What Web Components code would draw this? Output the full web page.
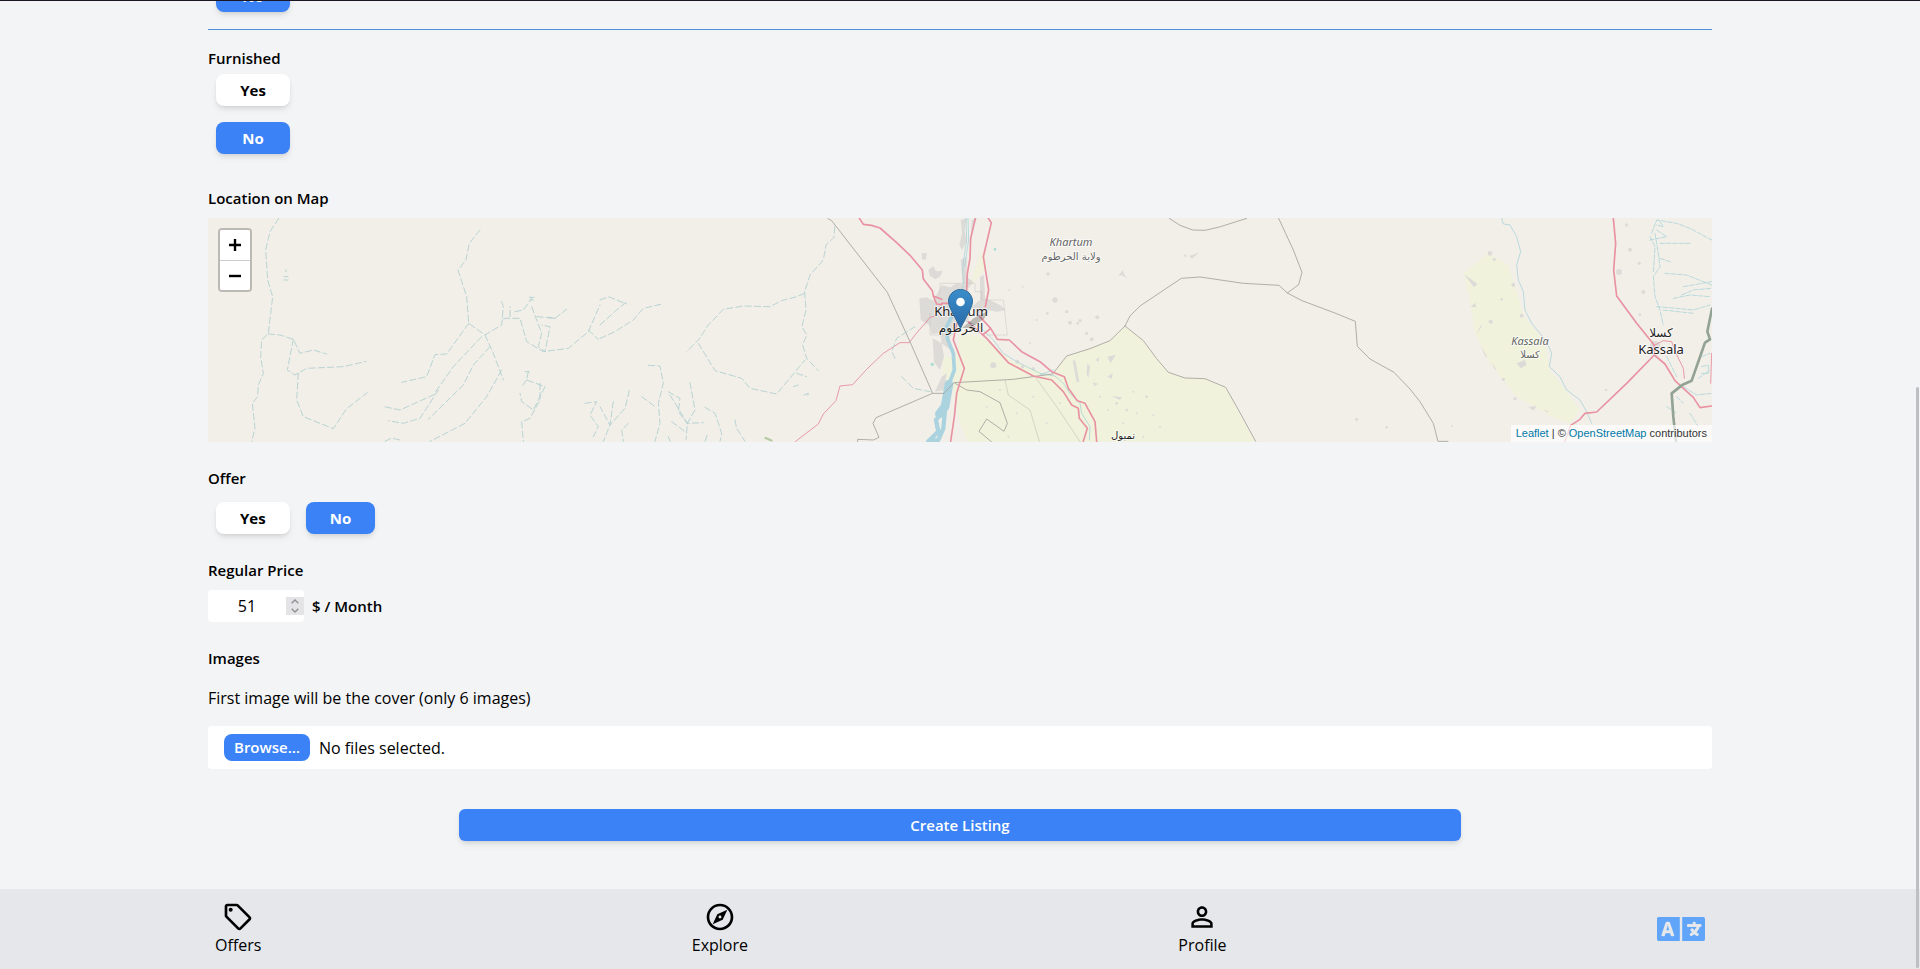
<!DOCTYPE html>
<html lang="en">
<head>
<meta charset="utf-8">
<meta name="viewport" content="width=device-width, initial-scale=1">
<title>Create Listing</title>
<style>
  html, body { margin: 0; }
  body { background: #f3f4f6; color: #000; font: 16px/24px "Open Sans", "Noto Sans", sans-serif; }
</style>
</head>
<body>
<listing-page></listing-page>

<script>
const define = (name, html, setup) => {
  const template = document.createElement('template');
  template.innerHTML = html;
  customElements.define(name, class extends HTMLElement {
    connectedCallback() {
      if (this.shadowRoot) return;
      this.attachShadow({ mode: 'open' }).append(template.content.cloneNode(true));
      if (setup) setup(this, this.shadowRoot);
    }
  });
};

/* Yes / No toggle button */
define('choice-button', `
<style>
  :host { display: block; margin: 8px; }
  button { display: block; width: 100%; height: 32px; padding: 0 24px; border: 0; border-radius: 8px;
    background: #fff; color: #000; font: inherit; font-size: 15px; font-weight: 700; cursor: pointer;
    box-shadow: 0 4px 6px -1px rgba(0,0,0,.1), 0 2px 4px -2px rgba(0,0,0,.1); }
  :host([active]) button { background: #3b82f6; color: #fff; }
</style>
<button type="button"><slot></slot></button>`,
(host, root) => root.querySelector('button').setAttribute('aria-pressed', host.hasAttribute('active')));

/* A titled group of controls */
define('form-group', `
<style>
  :host { display: block; }
  h2 { margin: 0; font-size: 15px; font-weight: 600; }
</style>
<h2></h2><slot></slot>`,
(host, root) => { root.querySelector('h2').textContent = host.getAttribute('heading'); });

define('price-field', `
<style>
  :host { display: flex; align-items: center; gap: 8px; margin-top: 8px; }
  .box { display: flex; align-items: center; width: 96px; height: 32px; border-radius: 4px; background: #fff; }
  input { width: 78px; box-sizing: border-box; padding: 0; border: 0; background: none; font: inherit; color: inherit;
    text-align: center; appearance: textfield; outline: 0; }
  input::-webkit-inner-spin-button { appearance: none; margin: 0; }
  .spin { display: flex; flex-direction: column; width: 18px; height: 18px; background: #e4e4e7; }
  .spin button { flex: 1; padding: 0; border: 0; background: none; display: grid; place-items: center; }
  svg { display: block; width: 8px; height: 5px; fill: none; stroke: #8f8f94; stroke-width: 1.3; }
  label { font-size: 15px; font-weight: 600; }
</style>
<div class="box">
  <input id="price" type="number" value="51">
  <div class="spin">
    <button type="button" aria-label="Increase"><svg viewBox="0 0 8 5"><path d="M.7 4.3 4 1l3.3 3.3"/></svg></button>
    <button type="button" aria-label="Decrease"><svg viewBox="0 0 8 5"><path d="M.7.7 4 4 7.3.7"/></svg></button>
  </div>
</div>
<label for="price">$ / Month</label>`,
(host, root) => {
  const input = root.querySelector('input');
  const [up, down] = root.querySelectorAll('button');
  up.onclick = () => input.stepUp();
  down.onclick = () => input.stepDown();
});

define('file-field', `
<style>
  :host { display: block; margin-top: 16px; }
  label { display: flex; align-items: center; gap: 9px; height: 43px; padding: 0 16px; border-radius: 4px;
    background: #fff; position: relative; }
  .browse { padding: 0 10px; line-height: 27px; border-radius: 8px; background: #3b82f6; color: #fff; font-size: 15px; font-weight: 600; }
  input { position: absolute; inset: 0; width: 100%; opacity: 0; }
</style>
<label><span class="browse">Browse…</span><span>No files selected.</span><input type="file" multiple accept="image/*"></label>`);

define('location-map', `
<style>
  :host { display: block; position: relative; height: 224px; margin-top: 8px; overflow: hidden; background: #f2efe9; }
  .map { display: block; width: 100%; height: 100%; }
  .zoom { position: absolute; top: 10px; left: 10px; border: 2px solid rgba(0,0,0,.22); border-radius: 4px; background-clip: padding-box; }
  .zoom button { display: grid; place-items: center; width: 30px; height: 30px; padding: 0; border: 0; background: #fff; }
  .zoom button:first-child { border-radius: 2px 2px 0 0; }
  .zoom button:last-child { border-top: 1px solid #ccc; border-radius: 0 0 2px 2px; }
  .zoom svg { width: 12px; height: 12px; stroke: #000; stroke-width: 2.4; }
  .credit { position: absolute; right: 0; bottom: 0; padding: 0 5px; background: rgba(255,255,255,.7); color: #333;
    font: 11px/17px "Liberation Sans", Arial, sans-serif; }
  a { color: #0078a8; text-decoration: none; }
  .l { fill: none; stroke-linejoin: round; stroke-linecap: round; }
  .r { stroke: #e892a2; stroke-width: 5; }
  .r2 { stroke: #e892a2; stroke-width: 2.8; }
  .b { stroke: #aaa9a3; stroke-width: 2.8; }
  .w { stroke: #aad3d9; stroke-width: 2.4; }
  .d { stroke: #a6cbcc; stroke-width: 2.3; stroke-dasharray: 19 9; }
  .u { fill: #dddbd8; }
  .g { fill: #f0f2db; }
  text { font-family: "Noto Sans", "DejaVu Sans", sans-serif; text-anchor: middle; paint-order: stroke; stroke: rgba(255,255,255,.6); stroke-width: 2px; stroke-linejoin: round; }
  .city { font-size: 13px; fill: #222; }
  .ar { font-size: 12px; fill: #222; font-family: "DejaVu Sans", sans-serif; }
  .state { font-size: 11px; fill: #666; font-style: italic; }
  .star { font-size: 10px; fill: #666; font-family: "DejaVu Sans", sans-serif; }
</style>
<svg class="map" viewBox="208 218 1504 224" preserveAspectRatio="xMidYMid slice" role="img" aria-label="Map around Khartoum">
  <defs>
    <linearGradient id="pin" x1="0" y1="0" x2="0" y2="1"><stop offset="0" stop-color="#3a8ecb"/><stop offset="1" stop-color="#2a69a8"/></linearGradient>
  </defs>

  <!-- farmland and built-up areas around the Nile -->
  <g transform="translate(800 210) scale(.33333)">
    <path class="g" d="M455 515 480 370 545 380 640 455 755 495 800 440 930 392 975 348 1030 392 1105 487 1155 504 1215 506 1277 532 1367 700H505L480 640Z"/>
    <path class="g" d="M510 230 560 170 548 120 520 190ZM430 440 425 510 450 515 460 440Z"/>
    <path class="u" d="M482 30 500 25 494 60 500 95 486 120 478 105 486 70ZM515 30 530 25 520 60 512 95ZM482 150 500 140 500 200 520 215 505 235 488 215ZM385 180 400 168 408 184 428 182 420 200 405 208 390 198ZM365 130 380 128 378 150 366 148ZM425 225 450 232 470 220 500 226 515 270 505 330 480 345 450 380 452 420 425 400 420 370 395 372 388 345 362 330 358 265 380 262 400 272 412 250ZM540 200 552 195 555 265 580 275 600 285 618 300 590 305 560 300 530 320 515 290 540 270ZM398 385 425 400 432 440 420 480 402 455ZM425 500 440 490 432 540 405 545Z"/>
    <path class="l" stroke="#c6c4c0" stroke-width="1.5" d="M420 250V220H525V245H545V270H610L622 375H560M390 310V375H440M392 320 375 345"/>
    <g class="u">
      <circle cx="580" cy="466" r="9"/><circle cx="652" cy="455" r="6"/><circle cx="668" cy="470" r="5"/><circle cx="700" cy="476" r="5"/><circle cx="765" cy="270" r="8"/><circle cx="800" cy="305" r="5"/><circle cx="810" cy="338" r="6"/><circle cx="742" cy="310" r="4"/><circle cx="744" cy="192" r="5"/><circle cx="892" cy="322" r="6"/><circle cx="840" cy="332" r="5"/><circle cx="860" cy="370" r="5"/><circle cx="875" cy="388" r="6"/><circle cx="833" cy="340" r="4"/>
      <path d="M955 198 968 180 972 192 982 205 965 196ZM818 450 826 452 838 515 830 517ZM862 460 870 470 865 505 860 490ZM922 440 948 434 932 460ZM885 450 898 442 896 455ZM922 500 938 490 936 506ZM880 517 895 522 882 528ZM935 558 965 562 960 570ZM1150 137 1158 132 1160 142ZM1168 138 1198 127 1176 146Z"/>
      <circle cx="980" cy="600" r="4"/><circle cx="1040" cy="560" r="4"/><circle cx="950" cy="580" r="4"/><circle cx="900" cy="560" r="3"/><circle cx="1010" cy="610" r="3"/><circle cx="600" cy="540" r="3"/><circle cx="650" cy="610" r="3"/><circle cx="700" cy="560" r="3"/><circle cx="740" cy="640" r="3"/><circle cx="625" cy="680" r="3"/><circle cx="780" cy="580" r="3"/><circle cx="560" cy="590" r="3"/><circle cx="1670" cy="628" r="5"/><circle cx="1760" cy="652" r="4"/>
      <circle cx="628" cy="240" r="3"/><circle cx="668" cy="230" r="3"/><circle cx="690" cy="400" r="3"/><circle cx="710" cy="330" r="3"/><circle cx="1000" cy="545" r="3"/><circle cx="970" cy="640" r="3"/><circle cx="1060" cy="615" r="3"/><circle cx="925" cy="600" r="3"/><circle cx="1080" cy="650" r="3"/><circle cx="1030" cy="680" r="3"/>
    </g>
    <!-- rivers -->
    <path class="l w" d="M498 25 500 90 488 170 490 225 478 280M504 25 506 90 494 170"/>
    <path class="l" stroke="#aad3df" stroke-width="11" d="M460 310 440 350 442 385 460 430 463 480 448 520"/>
    <path class="l" stroke="#aad3df" stroke-width="26" d="M447 522 435 590 418 612"/>
    <path class="l" stroke="#aad3df" stroke-width="13" d="M430 600 408 630 415 665 385 694M435 600 430 655 415 690 385 696"/>
    <path class="l w" d="M490 330 540 350 580 390 610 430 650 455 720 490 765 498 790 520 810 550 840 580 845 610 870 650 868 690M760 480 720 495"/>
    <circle cx="397" cy="463" r="5" fill="#a9dcd3"/><circle cx="585" cy="118" r="4" fill="#a9dcd3"/>
    <!-- province borders -->
    <path class="l b" d="M84 26 95 32 262 247 330 395 398 550 432 550 462 518 640 508 758 492 800 438 870 416 930 392 975 348M398 550 228 623 219 640 237 682 220 690 173 688V696M465 520 500 540 540 545 600 578 622 640 612 664 560 627 537 664 575 696"/>
    <path class="l" stroke="#bcbbb2" stroke-width="1.6" d="M705 500 770 590 840 695M615 510 625 555 690 600 718 694"/>
    <path class="l b" d="M975 348 990 318 1020 288 1144 205 1200 201 1330 220 1437 226 1462 249 1506 272 1602 308 1666 334 1672 409 1710 447 1782 487 1830 537 1860 575 1900 640 1914 694H1944M1462 249 1496 224 1506 187 1480 120 1436 25M1108 25 1140 46 1178 60 1215 61 1262 50 1340 25M975 348 1030 392 1070 446 1105 487 1155 504 1215 506 1277 532 1310 590 1367 694"/>
    <!-- trunk roads -->
    <path class="l r" d="M178 25 190 43 215 46 240 54 290 98 330 136 367 180 370 207 397 242 400 258 425 268M526 25 512 85 510 145 502 190 500 240M565 25 574 38 550 140 566 240 556 290M425 280H455M400 258 410 282 425 284M470 340 460 390 493 475 470 550 463 620 452 694M535 315 572 355 592 388 628 390 665 425 720 455 755 485 793 500 805 535 832 572 855 580 885 635 890 694M505 335 560 385 625 458 700 498 755 510 790 545 815 585 835 595 838 625 862 655 850 694M572 355 548 375"/>
    <path class="l r2" d="M405 318 390 322 345 375 328 398 300 398 250 430 200 478 158 524 120 528 108 572 70 612 55 642 0 684-14 695"/>
    <!-- seasonal streams -->
    <path class="l d" d="M104 50 102 82 78 105 70 150 30 195 14 245 18 300 6 350 20 375 8 405 20 445 55 482M285 445 275 425 290 385 345 350M305 500 340 535 390 545M14 250-10 260-55 272-90 290-170 288-230 298-275 345-305 390-340 425M-305 400-255 482-175 505-150 535-70 552 15 450"/>
  </g>

  <!-- seasonal streams in the west -->
  <g class="l d" transform="translate(200 210) scale(.33333)">
    <path d="M236 25 210 65 197 120 203 210 218 260 205 370 185 390 182 440 190 490 175 525 173 560 157 580 165 655 155 694M205 372 240 375 280 388 300 430 340 420 380 432M280 388 262 480 285 495 320 475 430 470 498 454M295 490 290 570 310 620 400 656 440 596 502 548"/>
    <path d="M840 60 808 100 798 150 774 180 800 260 806 340 855 375 905 345 910 290 903 270M855 375 880 430 910 510M806 340 740 432 705 434 680 500 605 517M845 380 760 470 700 555 600 600 553 590M870 410 820 465 790 525 685 628M715 540 660 625 610 640 565 632M905 480 860 560 795 640 690 694M555 694 575 684 600 690M910 325 960 325 980 395 1030 425 1105 415 1165 365 1200 285M930 320 930 290M945 305 970 300 995 265M995 290 1025 370 1015 410 1035 425 1050 350 1025 345M1010 320 1065 325 1100 298M1165 360 1195 388M985 485 980 510 1035 530 1000 600 965 575 960 550M980 510 965 530M1020 520 1020 570 990 625 965 635 970 694M1155 580 1190 575 1170 615 1195 650 1180 680M1200 345 1250 300 1280 275"/>
    <path stroke-dasharray="none" d="M252 200H264M252 210H264M258 180V185M988 262H1002M990 270H1000M1045 322 1065 325M975 485H987"/>
  </g>
  <g class="l d" transform="translate(600 210) scale(.33333)">
    <path d="M0 270 25 260 80 282M0 385 45 365 100 330 130 295 182 283M145 466 180 468 190 520 175 580 180 640 165 694M88 542 75 595 30 645 0 590M40 575 30 645 10 694M85 640 65 660 70 694M125 560 165 590M270 518 285 600 262 640 258 690M205 545 240 565 235 605 262 640 310 638M210 555 262 640M215 635 255 665M315 592 345 610 365 670 360 694M405 630 410 655 435 694M205 680 210 694M315 694 322 674M590 490 620 500M580 530 595 525M612 555 625 550 622 562"/>
    <path d="M497 684 520 694" stroke="#b5cba5" stroke-width="7"/>
  </g>

  <!-- Kassala and the eastern border -->
  <g transform="translate(1400 210) scale(.33333)">
    <path class="g" d="M190 190 265 130 325 165 355 260 370 320 430 390 450 480 540 600 510 640 455 620 350 560 270 460 225 370 210 270Z"/>
    <g class="u"><path d="M192 192 232 222 222 232ZM182 296 218 322ZM212 290 226 278 228 292ZM230 372 248 346 240 350ZM242 405 262 442 256 440ZM275 455 290 480 284 478ZM350 460 375 450 380 465 362 475ZM385 590 410 588 400 602ZM430 598 450 606 440 606Z"/>
      <circle cx="270" cy="130" r="7"/><circle cx="283" cy="148" r="5"/><circle cx="340" cy="225" r="6"/><circle cx="365" cy="317" r="6"/><circle cx="272" cy="335" r="6"/><circle cx="657" cy="186" r="9"/><circle cx="730" cy="246" r="6"/><circle cx="718" cy="160" r="5"/><circle cx="690" cy="119" r="6"/><circle cx="680" cy="45" r="5"/><circle cx="765" cy="408" r="16"/><circle cx="345" cy="566" r="5"/><circle cx="618" cy="540" r="4"/><circle cx="720" cy="314" r="4"/><circle cx="155" cy="648" r="3"/><circle cx="310" cy="508" r="5"/><circle cx="305" cy="268" r="4"/>
    </g>
    <path class="l w" d="M305 25 310 42 330 45 350 80 362 125 350 165 355 210 370 245 375 300 395 340 440 395 455 430 448 470 480 500 500 540 540 570 560 605 575 640"/>
    <path class="l w" stroke-dasharray="14 5" d="M755 70 770 30 830 40 870 55 935 90M770 60 800 80 750 90M780 100 870 100M765 70 775 130 780 170 760 200 765 260 780 300 790 345M750 80 765 110 760 190M795 190 860 195 935 225M780 145 810 155M845 255 880 240 935 235M820 265 870 255 930 260M770 290 830 295 880 300 930 285M790 300 880 310M850 230 935 215M780 35 790 50 770 45M905 440 930 430M905 470 925 465V490H905M850 530 890 555 935 550M895 505 930 480M800 590 830 610M870 610 895 650M830 560 850 580M800 440 830 500"/>
    <path class="l r" d="M640 25 647 100 641 180 650 258 710 340 762 404 763 435 795 462 825 512 850 535 880 562 900 593 935 588M763 435 680 520 590 606 555 610 540 628 512 646 495 694"/>
    <path class="l r2" d="M765 405 790 392 815 395 828 430 850 475 853 505M935 430 932 520"/>
    <path class="l" stroke="#92a294" stroke-width="8" d="M936 296 922 365 930 388 915 398 875 512 848 524 815 550 820 620 828 694"/>
  </g>

  <text class="state" x="1071" y="246">Khartum</text>
  <text class="star" x="1071" y="260">ولاية الخرطوم</text>
  <text class="city" x="961" y="316">Khartum</text>
  <text class="ar" x="961" y="332">الخرطوم</text>
  <text class="star" x="1123" y="439" style="fill:#222">تمبول</text>
  <text class="state" x="1530" y="345">Kassala</text>
  <text class="star" x="1530" y="358">كسلا</text>
  <text class="ar" x="1661" y="337">كسلا</text>
  <text class="city" x="1661" y="354">Kassala</text>

  <!-- marker -->
  <path d="m962 328 12-10 14-7-4 8-14 9Z" fill="#000" opacity=".22"/>
  <path d="M960.500 289.500c-6.800 0-12 5.400-12 11.800 0 3 1.300 5.800 2.500 8.500l9.500 18.500 9.500-18.500c1.200-2.700 2.500-5.500 2.500-8.500 0-6.400-5.200-11.800-12-11.800Z" fill="url(#pin)" stroke="#2e6c97"/>
  <circle cx="960.500" cy="302" r="4.300" fill="#fff"/>
</svg>
<div class="zoom">
  <button type="button" aria-label="Zoom in"><svg viewBox="0 0 12 12"><path d="M0 6h12M6 0v12"/></svg></button>
  <button type="button" aria-label="Zoom out"><svg viewBox="0 0 12 12"><path d="M0 6h12"/></svg></button>
</div>
<div class="credit"><a href="#leaflet">Leaflet</a> | © <a href="#osm">OpenStreetMap</a> contributors</div>`);

define('nav-item', `
<style>
  :host { display: block; }
  a { display: flex; flex-direction: column; align-items: center; color: inherit; text-decoration: none; }
  ::slotted(svg) { display: block; width: 32px; height: 32px; }
</style>
<a href="#"><slot name="icon"></slot><span><slot></slot></span></a>`);

define('bottom-nav', `
<style>
  :host { display: block; background: #e5e7eb; }
  nav { display: flex; justify-content: space-between; align-items: center; height: 80px; padding: 0 215px; }
  .lang { display: block; padding: 0; border: 0; background: none; color: #60a5fa; }
  .lang svg { display: block; width: 48px; height: 48px; }
</style>
<nav>
  <nav-item><svg slot="icon" viewBox="0 0 24 24"><path d="m21.410 11.580-9-9C12.050 2.220 11.550 2 11 2H4c-1.100 0-2 .9-2 2v7c0 .55.22 1.050.59 1.420l9 9c.36.36.86.58 1.410.58s1.050-.22 1.410-.59l7-7c.37-.36.59-.86.59-1.410s-.23-1.060-.59-1.420zM13 20.010 4 11V4h7v-.01l9 9-7 7.020z"/><circle cx="6.500" cy="6.500" r="1.500"/></svg>Offers</nav-item>
  <nav-item><svg slot="icon" viewBox="0 0 24 24"><path d="M12 2C6.480 2 2 6.480 2 12s4.480 10 10 10 10-4.480 10-10S17.520 2 12 2zm0 18c-4.410 0-8-3.590-8-8s3.590-8 8-8 8 3.590 8 8-3.590 8-8 8zm-5.500-2.500 7.510-3.490L17.500 6.500 9.990 9.990 6.500 17.500zm5.500-6.600c.61 0 1.100.49 1.100 1.100s-.49 1.100-1.100 1.100-1.100-.49-1.100-1.100.49-1.100 1.100-1.100z"/></svg>Explore</nav-item>
  <nav-item><svg slot="icon" viewBox="0 0 24 24"><path d="M12 5.900c1.160 0 2.100.94 2.100 2.100s-.94 2.100-2.100 2.100S9.900 9.160 9.900 8s.94-2.100 2.100-2.100m0 9c2.970 0 6.100 1.460 6.100 2.100v1.100H5.900V17c0-.64 3.130-2.100 6.100-2.100M12 4C9.790 4 8 5.790 8 8s1.790 4 4 4 4-1.790 4-4-1.790-4-4-4zm0 9c-2.670 0-8 1.340-8 4v3h16v-3c0-2.660-5.330-4-8-4z"/></svg>Profile</nav-item>
  <button class="lang" type="button" aria-label="Change language"><svg viewBox="0 0 640 512" fill="currentColor"><path d="M152.1 236.2c-3.5-12.1-7.8-33.2-7.8-33.2h-.5s-4.3 21.1-7.8 33.2l-11.1 37.5H163zM616 96H336v320h280c13.3 0 24-10.7 24-24V120c0-13.3-10.7-24-24-24zm-24 120c0 6.6-5.4 12-12 12h-11.4c-6.9 23.6-21.7 47.4-42.7 69.900 8.4 6.4 17.1 12.5 26.1 18 5.5 3.4 7.3 10.5 4.1 16.200l-7.900 13.900c-3.4 5.9-10.9 7.8-16.700 4.300-12.600-7.800-24.500-16.100-35.400-24.900-10.900 8.700-22.700 17.100-35.400 24.900-5.800 3.500-13.300 1.600-16.700-4.300l-7.900-13.900c-3.200-5.600-1.400-12.800 4.200-16.200 9.300-5.700 18-11.700 26.100-18-7.900-8.400-14.900-17-21-25.700-4-5.700-2.200-13.600 3.700-17.100l6.500-3.900 7.300-4.300c5.400-3.200 12.400-1.700 16 3.400 5 7 10.800 14 17.400 20.900 13.500-14.200 23.800-28.900 30-43.200H412c-6.600 0-12-5.400-12-12v-16c0-6.600 5.400-12 12-12h64v-16c0-6.600 5.400-12 12-12h16c6.600 0 12 5.400 12 12v16h64c6.600 0 12 5.400 12 12zM0 120v272c0 13.300 10.700 24 24 24h280V96H24c-13.300 0-24 10.700-24 24zm58.900 216.100L116.400 167c1.700-4.900 6.200-8.100 11.400-8.100h32.500c5.100 0 9.700 3.300 11.400 8.100l57.500 169.100c2.600 7.800-3.100 15.900-11.400 15.900h-22.900a12 12 0 0 1-11.500-8.600l-9.400-31.900h-60.200l-9.100 31.800c-1.500 5.100-6.200 8.700-11.500 8.700H70.300c-8.200 0-14-8.100-11.400-15.900z"/></svg></button>
</nav>`);

define('listing-page', `
<style>
  :host { display: flex; flex-direction: column; min-height: 100vh; box-sizing: border-box; border-top: 1px solid #1b1622; position: relative; }
  main { flex: 1; margin: 0 208px; }
  form { display: flex; flex-direction: column; }
  .cut { display: flex; align-items: flex-end; height: 28px; overflow: hidden; border-bottom: 1px solid #4a90d9; }
  .cut choice-button, .stack choice-button { width: 74px; }
  .cut choice-button { margin-bottom: 17px; }
  .stack { margin-top: 16px; }
  .stack choice-button:first-of-type { margin-top: 4px; }
  .stack choice-button + choice-button { margin-top: 16px; }
  .group { margin-top: 24px; }
  .row { display: flex; margin-top: 4px; }
  .row choice-button { margin-bottom: 0; }
  p { margin: 16px 0 0; }
  .submit { width: 66.667%; height: 32px; margin: 40px auto 48px; border: 0; border-radius: 6px; background: #3b82f6; color: #fff;
    font: inherit; font-size: 15px; font-weight: 600; box-shadow: 0 4px 6px -1px rgba(0,0,0,.1), 0 2px 4px -2px rgba(0,0,0,.1); }
  .bar { position: absolute; right: 1px; top: 386px; bottom: 1px; width: 3px; border-radius: 2px; background: #bfbfc3; }
</style>
<main>
  <form>
    <div class="cut"><choice-button active>No</choice-button></div>
    <form-group class="stack" heading="Furnished">
      <choice-button>Yes</choice-button>
      <choice-button active>No</choice-button>
    </form-group>
    <form-group class="group" heading="Location on Map"><location-map></location-map></form-group>
    <form-group class="group" heading="Offer">
      <div class="row"><choice-button>Yes</choice-button><choice-button active>No</choice-button></div>
    </form-group>
    <form-group class="group" heading="Regular Price"><price-field></price-field></form-group>
    <form-group class="group" heading="Images">
      <p>First image will be the cover (only 6 images)</p>
      <file-field></file-field>
    </form-group>
    <button class="submit" type="button">Create Listing</button>
  </form>
</main>
<bottom-nav></bottom-nav>
<div class="bar"></div>`);
</script>
</body>
</html>
